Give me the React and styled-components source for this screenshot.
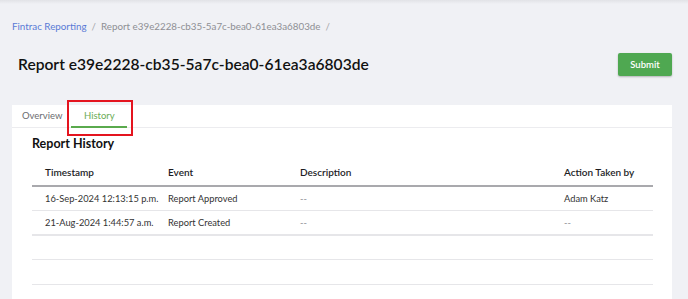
import styled, { createGlobalStyle } from "styled-components";

const rows = [
  {
    time: "16-Sep-2024 12:13:15 p.m.",
    event: "Report Approved",
    description: "--",
    by: "Adam Katz",
  },
  {
    time: "21-Aug-2024 1:44:57 a.m.",
    event: "Report Created",
    description: "--",
    by: "--",
  },
  {},
  {},
  {},
];

export default function App() {
  return (
    <>
      <Global />
      <Page>
        <Crumbs>
          <CrumbLink>Fintrac Reporting</CrumbLink>
          <Sep>/</Sep>
          <Crumb>Report e39e2228-cb35-5a7c-bea0-61ea3a6803de</Crumb>
          <Sep>/</Sep>
        </Crumbs>
        <Header>
          <Title>Report e39e2228-cb35-5a7c-bea0-61ea3a6803de</Title>
          <SubmitButton>Submit</SubmitButton>
        </Header>
        <Card>
          <Tabs>
            <Tab>Overview</Tab>
            <Tab active>
              History
              <Highlight />
            </Tab>
          </Tabs>
          <Body>
            <SectionTitle>Report History</SectionTitle>
            <Table>
              <colgroup>
                <col style={{ width: 123 }} />
                <col style={{ width: 132 }} />
                <col />
                <col style={{ width: 102 }} />
              </colgroup>
              <thead>
                <tr>
                  <Th>Timestamp</Th>
                  <Th>Event</Th>
                  <Th>Description</Th>
                  <Th>Action Taken by</Th>
                </tr>
              </thead>
              <tbody>
                {rows.map((r, i) => (
                  <Row key={i} thick={i === 1}>
                    <Td>{r.time}</Td>
                    <Td>{r.event}</Td>
                    <Td muted>{r.description}</Td>
                    <Td muted={r.by === "--"}>{r.by}</Td>
                  </Row>
                ))}
              </tbody>
            </Table>
          </Body>
        </Card>
      </Page>
    </>
  );
}

const Global = createGlobalStyle`
  html, body {
    margin: 0;
    background: #f0f1f5;
    font-family: Lato, "Open Sans", sans-serif;
    color: #1d1d1f;
  }
`;

const Page = styled.div`
  min-height: 299px;
  padding: 0 16px 0 12px;
  background: linear-gradient(#e2e3e7, #f0f1f5 4px);
  overflow: hidden;
`;

const Crumbs = styled.div`
  display: flex;
  align-items: center;
  gap: 5px;
  padding-top: 18px;
  height: 15px;
  font-size: 9.8px;
`;

const CrumbLink = styled.span`
  color: #5a7bd6;
`;

const Crumb = styled.span`
  color: #8e8f94;
`;

const Sep = styled.span`
  color: #a4a5aa;
`;

const Header = styled.div`
  display: flex;
  align-items: center;
  justify-content: space-between;
  height: 24px;
  margin-top: 19px;
  padding-left: 6px;
`;

const Title = styled.h1`
  margin: 0;
  font-size: 15.6px;
  font-weight: 600;
  color: #111;
`;

const SubmitButton = styled.button`
  width: 54px;
  height: 23px;
  border: none;
  border-radius: 2px;
  background: #4fa851;
  color: #fff;
  font-family: inherit;
  font-size: 9.5px;
  font-weight: 600;
  box-shadow: 0 1px 2px rgba(0, 0, 0, 0.25);
`;

const Card = styled.div`
  margin-top: 29px;
  background: #fff;
  min-height: 200px;
`;

const Tabs = styled.div`
  display: flex;
  gap: 1px;
  padding-left: 2px;
  height: 22px;
  border-bottom: 1px solid #ececef;
`;

const Tab = styled.div`
  position: relative;
  display: flex;
  align-items: center;
  justify-content: center;
  padding: 0 ${(p) => (p.active ? "12.5px" : "8px")};
  font-size: 9.5px;
  color: ${(p) => (p.active ? "#6aac55" : "#6b6c70")};
  border-bottom: 2px solid ${(p) => (p.active ? "#5aaa4d" : "transparent")};
  margin-bottom: -1px;
`;

const Highlight = styled.div`
  position: absolute;
  left: -4px;
  right: -6px;
  top: -5px;
  bottom: -10px;
  border: 2px solid #e4141f;
  pointer-events: none;
`;

const Body = styled.div`
  padding: 8px 19px 0 20px;
`;

const SectionTitle = styled.h2`
  margin: 0 0 10px;
  font-size: 12.5px;
  font-weight: 700;
  color: #111;
`;

const Table = styled.table`
  width: 100%;
  table-layout: fixed;
  border-collapse: collapse;
`;

const Th = styled.th`
  text-align: left;
  font-size: 10px;
  font-weight: 600;
  color: #1d1d1f;
  height: 22px;
  padding: 0 0 2px 13px;
  border-bottom: 2px solid #a9a9ad;
`;

const Row = styled.tr`
  height: 24.5px;
  border-bottom: ${(p) => (p.thick ? "2px" : "1px")} solid #e6e6e9;
`;

const Td = styled.td`
  padding: 0 0 0 13px;
  font-size: 9.3px;
  color: ${(p) => (p.muted ? "#8e8f94" : "#333")};
  white-space: nowrap;
`;
